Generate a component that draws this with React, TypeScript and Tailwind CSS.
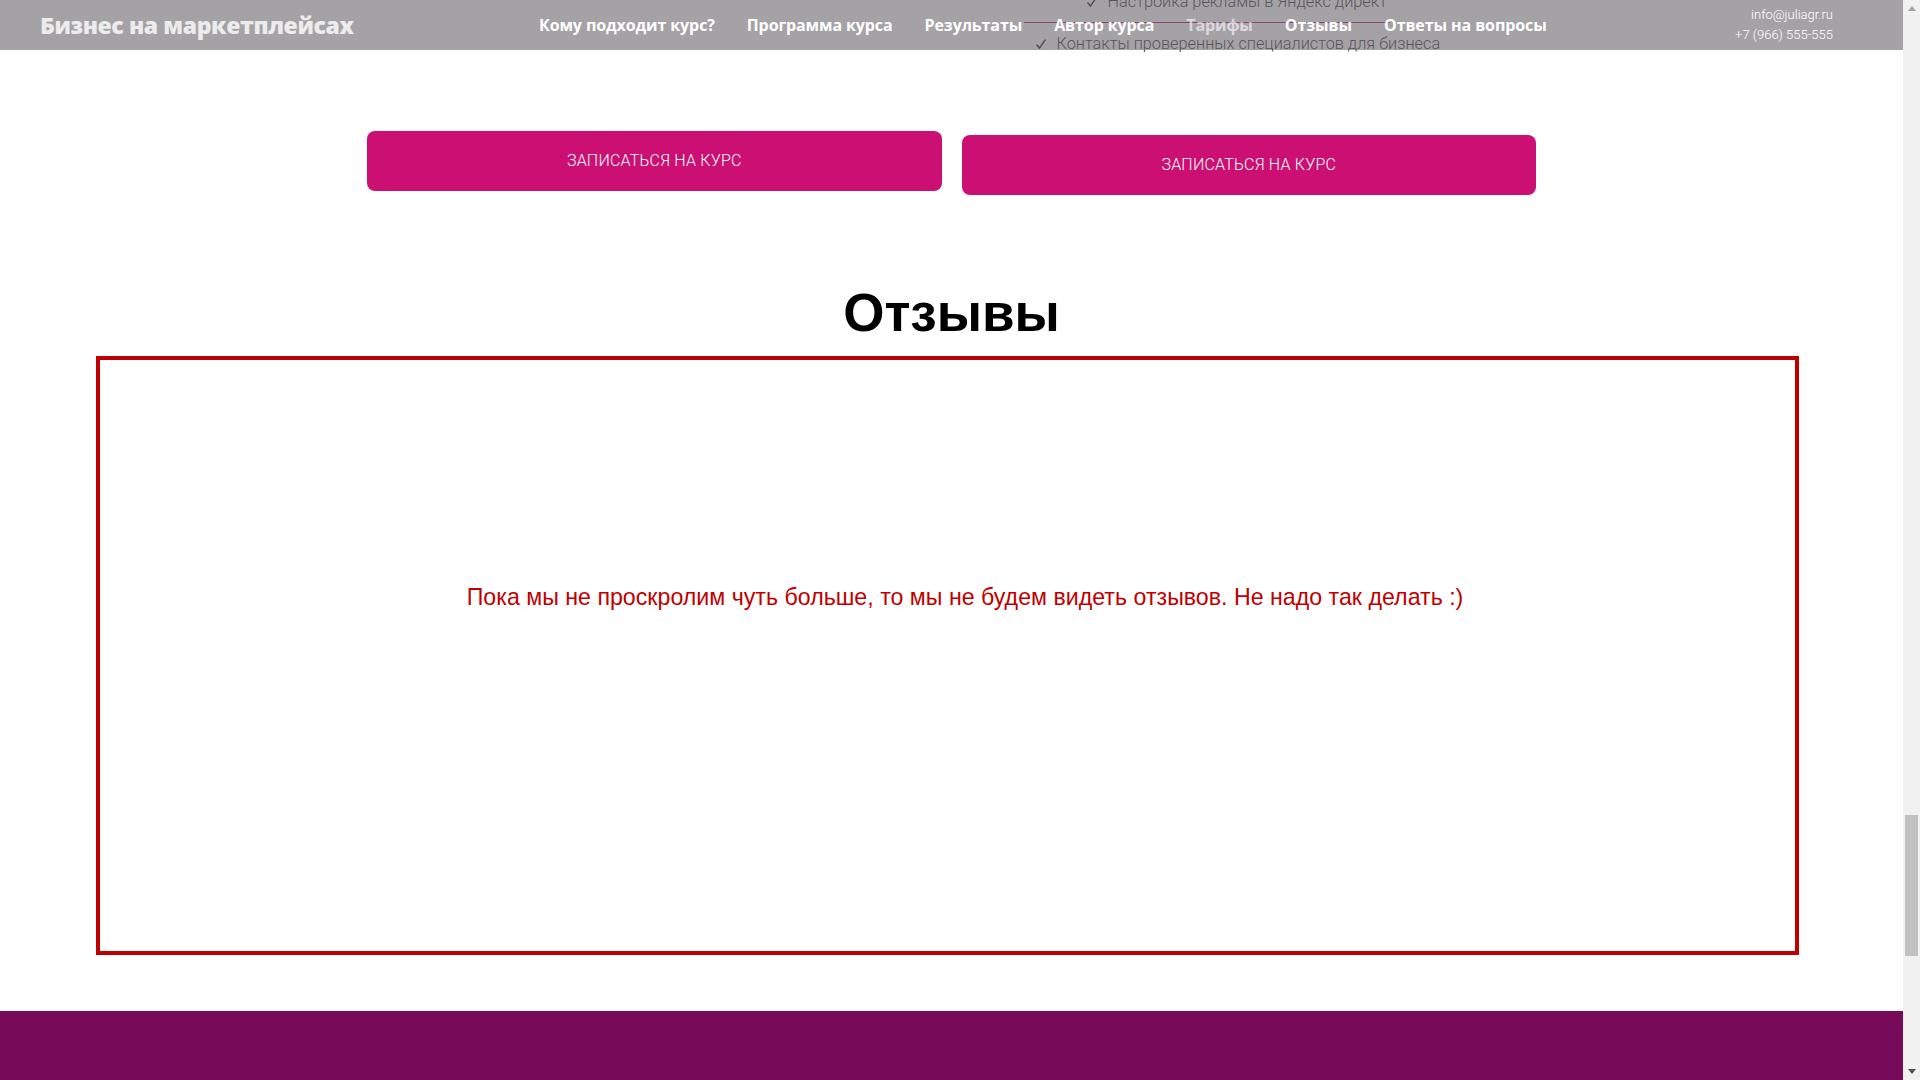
import React from 'react';

const navItems = [
  { label: 'Кому подходит курс?', dim: false },
  { label: 'Программа курса', dim: false },
  { label: 'Результаты', dim: false },
  { label: 'Автор курса', dim: false },
  { label: 'Тарифы', dim: true },
  { label: 'Отзывы', dim: false },
  { label: 'Ответы на вопросы', dim: false },
];

const Check = () => (
  <svg width="12" height="12" viewBox="0 0 12 12" className="shrink-0">
    <path d="M1.5 6.5 L4.5 10 L10.5 1.5" fill="none" stroke="#222" strokeWidth="1.4" />
  </svg>
);

function Header() {
  return (
    <header className="absolute top-0 left-0 right-0 z-10 h-[50px] flex items-center bg-[rgba(110,105,112,0.62)]">
      <div className="w-[539px] pl-[40px] text-[23px] font-extrabold tracking-[-0.4px] text-[#ececec] font-['Open_Sans',sans-serif]">
        Бизнес на маркетплейсах
      </div>
      <nav className="flex items-center gap-[32px] text-[16px] font-bold tracking-[-0.1px] text-white font-['Open_Sans',sans-serif]">
        {navItems.map((item) => (
          <a key={item.label} className={item.dim ? 'opacity-60' : ''}>
            {item.label}
          </a>
        ))}
      </nav>
      <div className="ml-auto pr-[70px] flex flex-col items-end text-[13px] font-light leading-[20px] text-white font-['Roboto',sans-serif]">
        <span>info@juliagr.ru</span>
        <span>+7 (966) 555-555</span>
      </div>
    </header>
  );
}

function Scrollbar() {
  return (
    <div className="w-[17px] h-full shrink-0 bg-[#f1f1f1] flex flex-col items-center">
      <div className="h-[17px] shrink-0 flex items-center justify-center">
        <svg width="8" height="5" viewBox="0 0 8 5">
          <path d="M0 5 L4 0 L8 5 Z" fill="#a3a3a3" />
        </svg>
      </div>
      <div className="mt-[798px] w-[13px] h-[141px] shrink-0 bg-[#c1c1c1]" />
      <div className="mt-auto h-[17px] shrink-0 flex items-center justify-center">
        <svg width="8" height="5" viewBox="0 0 8 5">
          <path d="M0 0 L8 0 L4 5 Z" fill="#505050" />
        </svg>
      </div>
    </div>
  );
}

export default function App() {
  return (
    <div className="flex h-screen w-full overflow-hidden bg-white">
      <main className="relative flex-1 overflow-hidden flex flex-col">
        <Header />

        {/* tariff list tail, scrolled under the header */}
        <div className="shrink-0 w-[1169px] mx-auto grid grid-cols-2 gap-[20px] -mt-[10px] font-['Roboto',sans-serif]">
          <div />
          <div className="pl-[62px] flex flex-col items-start text-[16.3px] font-light leading-[24px] text-[#3a2f3c]">
            <div className="ml-[62px] flex items-center gap-[10px]">
              <Check />
              <span>Настройка рекламы в Яндекс директ</span>
            </div>
            <div className="mt-[8px] h-px w-[366px] bg-[#cc0e74]" />
            <div className="mt-[9px] ml-[11px] flex items-center gap-[10px]">
              <Check />
              <span>Контакты проверенных специалистов для бизнеса</span>
            </div>
          </div>
        </div>

        <div className="shrink-0 w-[1169px] mx-auto mt-[75px] grid grid-cols-2 gap-[20px] items-start font-['Roboto',sans-serif]">
          <button className="h-[60px] rounded-lg bg-[#cc0f72] text-white text-[16px] font-light uppercase tracking-[0.2px]">
            Записаться на курс
          </button>
          <button className="mt-[4px] h-[60px] rounded-lg bg-[#cc0f72] text-white text-[16px] font-light uppercase tracking-[0.2px]">
            Записаться на курс
          </button>
        </div>

        <h2 className="shrink-0 mt-[91px] text-center text-[53px] leading-[54px] font-bold text-black font-['Liberation_Sans',Arial,sans-serif]">
          Отзывы
        </h2>

        <div className="shrink-0 mt-[16px] ml-[96px] w-[1703px] h-[599px] border-4 border-[#c00000] pt-[224px] pl-[35px] text-center">
          <p className="text-[23.2px] leading-[26px] text-[#c00000] font-['Liberation_Sans',Arial,sans-serif]">
            Пока мы не проскролим чуть больше, то мы не будем видеть отзывов. Не надо так делать :)
          </p>
        </div>

        <footer className="shrink-0 mt-[56px] h-[200px] bg-[#780b59]" />
      </main>
      <Scrollbar />
    </div>
  );
}
